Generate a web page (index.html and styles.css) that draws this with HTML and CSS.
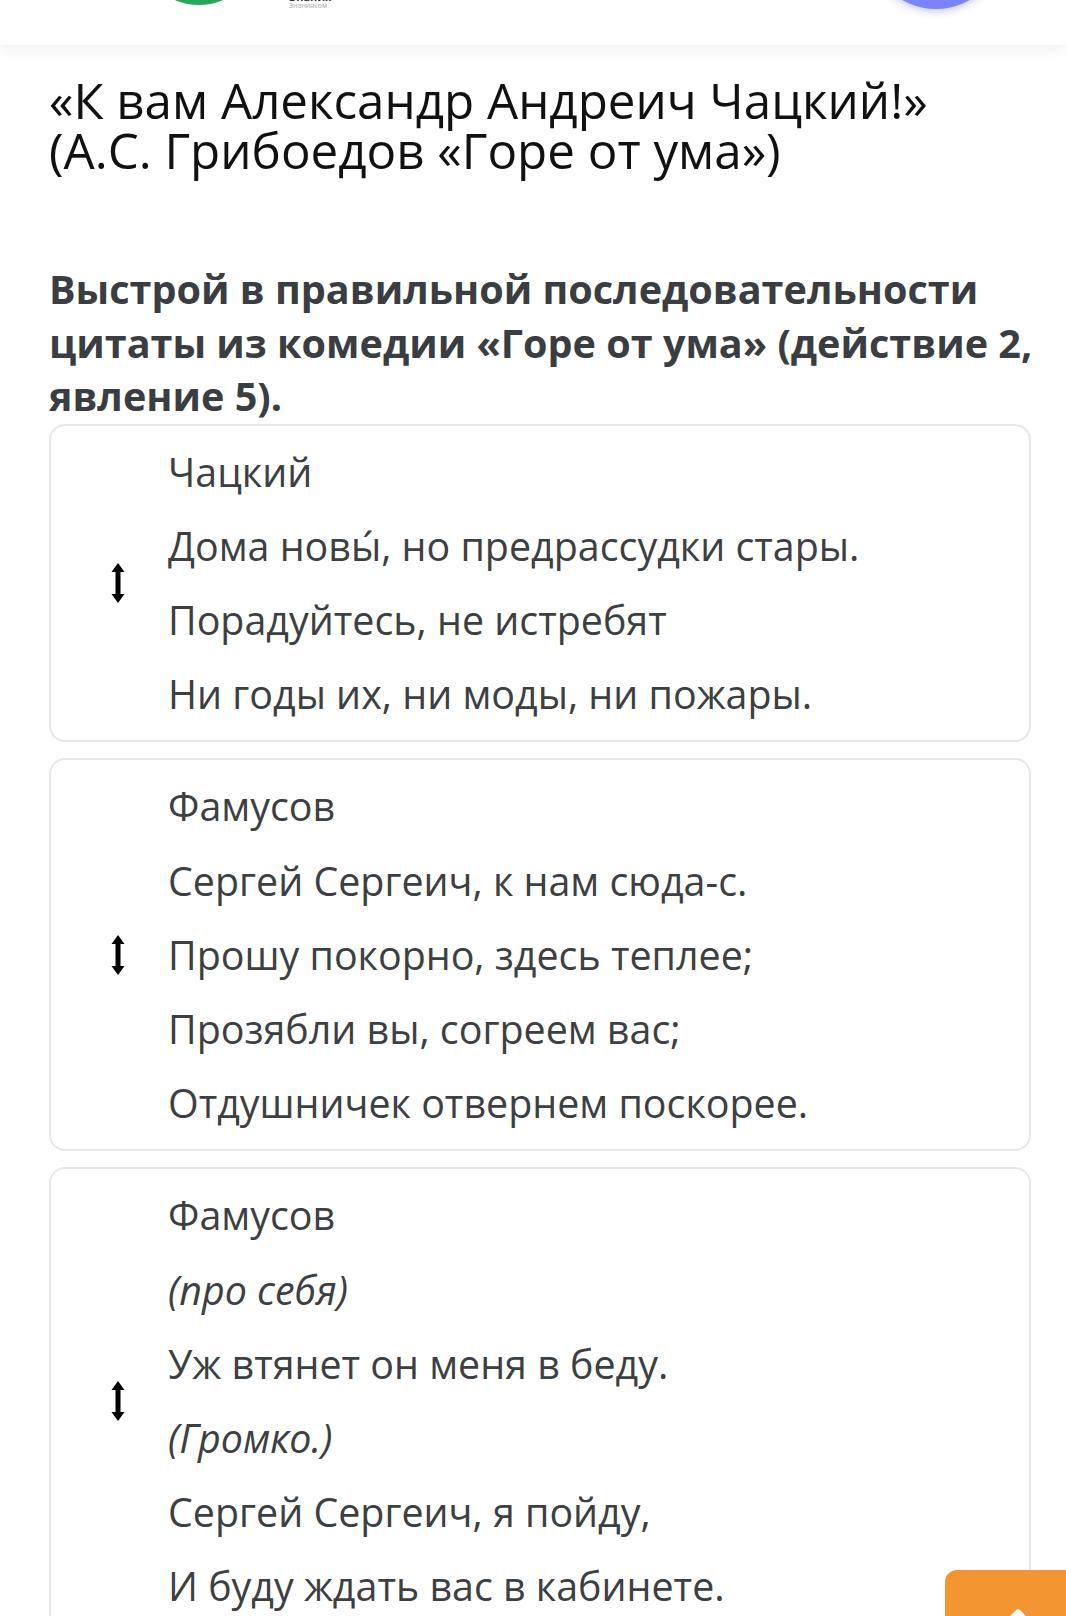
FILE: index.html
```html
<!DOCTYPE html>
<html lang="ru">
<head>
<meta charset="utf-8">
<title>Горе от ума</title>
<link rel="stylesheet" href="styles.css">
</head>
<body>
<header class="topbar">
  <div class="avatar-green"></div>
  <div class="brand">
    <span class="brand-name">Знания</span>
    <span class="brand-sub">Знанияком</span>
  </div>
  <div class="spacer"></div>
  <div class="avatar-purple"></div>
</header>

<main class="content">
  <h1 class="title">«К вам Александр Андреич Чацкий!» (А.С. Грибоедов «Горе от ума»)</h1>

  <h2 class="task">Выстрой в правильной последовательности цитаты из комедии «Горе от ума» (действие 2, явление 5).</h2>

  <div class="cards">
    <div class="card">
      <div class="handle">
        <svg width="14" height="40" viewBox="0 0 14 40"><path d="M7 0 L13.5 9 L9.5 9 L9.5 31 L13.5 31 L7 40 L0.5 31 L4.5 31 L4.5 9 L0.5 9 Z" fill="#000"/></svg>
      </div>
      <div class="lines">
        <p>Чацкий</p>
        <p>Дома новы́, но предрассудки стары.</p>
        <p>Порадуйтесь, не истребят</p>
        <p>Ни годы их, ни моды, ни пожары.</p>
      </div>
    </div>

    <div class="card">
      <div class="handle">
        <svg width="14" height="40" viewBox="0 0 14 40"><path d="M7 0 L13.5 9 L9.5 9 L9.5 31 L13.5 31 L7 40 L0.5 31 L4.5 31 L4.5 9 L0.5 9 Z" fill="#000"/></svg>
      </div>
      <div class="lines">
        <p>Фамусов</p>
        <p>Сергей Сергеич, к нам сюда-с.</p>
        <p>Прошу покорно, здесь теплее;</p>
        <p>Прозябли вы, согреем вас;</p>
        <p>Отдушничек отвернем поскорее.</p>
      </div>
    </div>

    <div class="card">
      <div class="handle">
        <svg width="14" height="40" viewBox="0 0 14 40"><path d="M7 0 L13.5 9 L9.5 9 L9.5 31 L13.5 31 L7 40 L0.5 31 L4.5 31 L4.5 9 L0.5 9 Z" fill="#000"/></svg>
      </div>
      <div class="lines">
        <p>Фамусов</p>
        <p class="it">(про себя)</p>
        <p>Уж втянет он меня в беду.</p>
        <p class="it">(Громко.)</p>
        <p>Сергей Сергеич, я пойду,</p>
        <p>И буду ждать вас в кабинете.</p>
      </div>
    </div>
  </div>
</main>

<button class="to-top" aria-label="Наверх">
  <svg width="40" height="30" viewBox="0 0 40 30"><path d="M6 24 L20 10 L34 24" fill="none" stroke="#fff" stroke-width="7" stroke-linecap="round" stroke-linejoin="round"/></svg>
</button>
</body>
</html>
```

FILE: styles.css
```css
* { box-sizing: border-box; }

html, body {
  margin: 0;
  padding: 0;
  background: #ffffff;
}

body {
  font-family: "Open Sans", "Noto Sans", sans-serif;
  color: #3c4043;
}

.topbar {
  height: 45px;
  display: flex;
  align-items: flex-end;
  overflow: hidden;
  background: #fff;
  box-shadow: 0 3px 14px rgba(0, 0, 0, 0.07);
  padding-left: 139px;
  padding-right: 62px;
}

.avatar-green {
  width: 120px;
  height: 120px;
  border-radius: 50%;
  background: #2aa65c;
  margin-bottom: 40px;
  flex: none;
}

.brand {
  display: flex;
  flex-direction: column;
  margin-left: 30px;
  margin-bottom: 35px;
}

.brand-name {
  font-size: 11px;
  line-height: 11px;
  font-weight: 700;
  color: #333;
}

.brand-sub {
  font-size: 7px;
  line-height: 8px;
  color: #aaa;
}

.spacer { flex: 1; }

.avatar-purple {
  width: 136px;
  height: 136px;
  border-radius: 50%;
  background: #7c83f7;
  box-shadow: 0 2px 8px rgba(124, 131, 247, 0.45);
  margin-bottom: 36px;
  flex: none;
}

.content {
  padding: 0 35px 0 49px;
}

.title {
  margin: 30px 0 0 0;
  font-size: 49.3px;
  font-weight: 400;
  line-height: 50px;
  color: #111;
}

.task {
  margin: 88px -10px 0 0;
  font-size: 39.6px;
  font-weight: 700;
  line-height: 53.5px;
  color: #3a3d41;
}

.cards {
  display: flex;
  flex-direction: column;
  gap: 16px;
}

.card {
  display: flex;
  align-items: center;
  border: 2px solid #e6e7e8;
  border-radius: 16px;
  padding: 9px 0 9px 60px;
}

.handle {
  width: 14px;
  flex: none;
  display: flex;
}

.lines {
  margin-left: 43px;
}

.lines p {
  margin: 0;
  font-size: 39.4px;
  line-height: 74.2px;
  color: #3c4043;
  white-space: nowrap;
}

.lines p.it {
  font-style: italic;
}

.to-top {
  position: fixed;
  right: 0;
  bottom: -74px;
  width: 121px;
  height: 120px;
  border: none;
  border-radius: 12px 0 0 0;
  background: #f39530;
  padding: 0;
  display: flex;
  justify-content: flex-start;
  align-items: flex-start;
}

.to-top svg {
  margin-left: 53px;
  margin-top: 33px;
}
```
